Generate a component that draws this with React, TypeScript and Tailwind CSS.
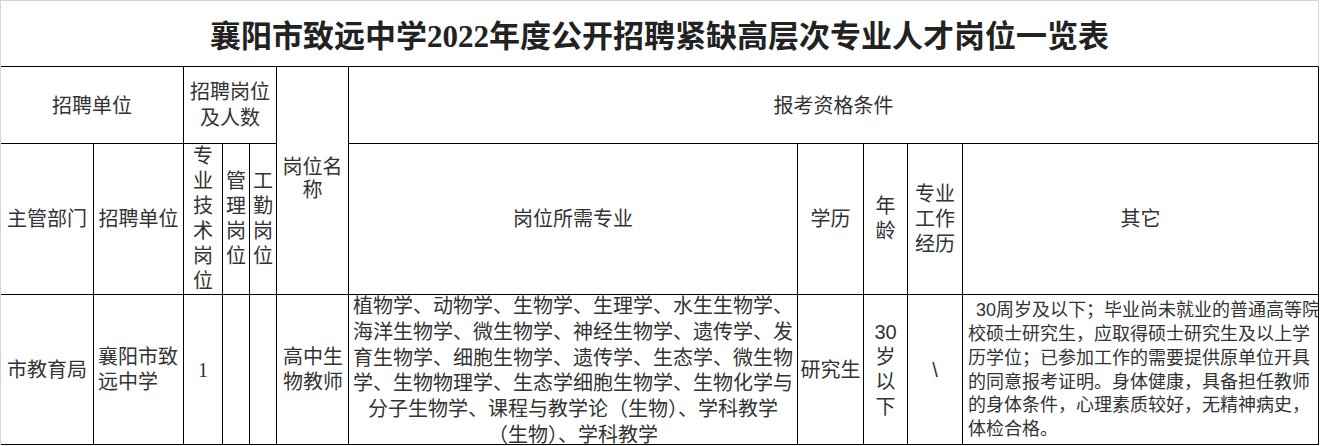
import type { ReactNode } from "react";

function Cell({
  className = "",
  children,
}: {
  className?: string;
  children?: ReactNode;
}) {
  return (
    <div
      className={`flex items-center justify-center overflow-hidden border-r border-b border-black text-center ${className}`}
    >
      {children}
    </div>
  );
}

function Stack({ chars }: { chars: string[] }) {
  return (
    <div className="leading-[25px] whitespace-nowrap">
      {chars.map((c, i) => (
        <div key={i}>{c}</div>
      ))}
    </div>
  );
}

const majors = [
  "植物学、动物学、生物学、生理学、水生生物学、",
  "海洋生物学、微生物学、神经生物学、遗传学、发",
  "育生物学、细胞生物学、遗传学、生态学、微生物",
  "学、生物物理学、生态学细胞生物学、生物化学与",
  "分子生物学、课程与教学论（生物）、学科教学",
  "（生物）、学科教学",
];

const others = [
  "校硕士研究生，应取得硕士研究生及以上学",
  "历学位；已参加工作的需要提供原单位开具",
  "的同意报考证明。身体健康，具备担任教师",
  "的身体条件，心理素质较好，无精神病史，",
  "体检合格。",
];

export default function App() {
  return (
    <div className="min-h-screen bg-white">
      <div className="grid w-fit grid-cols-[93px_90px_39px_27px_27px_72px_449px_66px_44px_55px_356px] grid-rows-[66px_77px_151px_150px] border-t border-l border-[#d4d4d4] font-['Liberation_Sans','Noto_Sans_CJK_SC',sans-serif] text-[20px] text-[#333]">
        {/* title */}
        <div className="col-span-11 flex items-center justify-center border-r border-b border-r-[#d4d4d4] border-b-black pt-[5px]">
          <h1 className="font-['Liberation_Serif','Noto_Sans_CJK_SC',serif] text-[31px] font-bold leading-none text-[#222]">
            襄阳市致远中学2022年度公开招聘紧缺高层次专业人才岗位一览表
          </h1>
        </div>

        {/* header row 1 */}
        <Cell className="col-span-2 pt-[2px]">招聘单位</Cell>
        <Cell className="col-span-3 leading-[26px]">
          <div>
            招聘岗位
            <br />
            及人数
          </div>
        </Cell>
        <Cell className="row-span-2 items-start leading-[23px]">
          <div className="mt-[89px]">
            岗位名
            <br />称
          </div>
        </Cell>
        <Cell className="col-span-5 pt-[2px]">报考资格条件</Cell>

        {/* header row 2 */}
        <Cell>主管部门</Cell>
        <Cell>招聘单位</Cell>
        <Cell>
          <Stack chars={["专", "业", "技", "术", "岗", "位"]} />
        </Cell>
        <Cell>
          <Stack chars={["管", "理", "岗", "位"]} />
        </Cell>
        <Cell>
          <Stack chars={["工", "勤", "岗", "位"]} />
        </Cell>
        <Cell>岗位所需专业</Cell>
        <Cell>学历</Cell>
        <Cell>
          <Stack chars={["年", "龄"]} />
        </Cell>
        <Cell>
          <Stack chars={["专业", "工作", "经历"]} />
        </Cell>
        <Cell>其它</Cell>

        {/* data row */}
        <Cell>市教育局</Cell>
        <Cell className="justify-start pl-[4px]">
          <div className="text-left leading-[25px]">
            襄阳市致
            <br />
            远中学
          </div>
        </Cell>
        <Cell className="font-['Liberation_Serif','Noto_Sans_CJK_SC',serif]">
          1
        </Cell>
        <Cell />
        <Cell />
        <Cell className="justify-start pl-[6px]">
          <div className="text-left leading-[25px]">
            高中生
            <br />
            物教师
          </div>
        </Cell>
        <Cell className="items-start">
          <div className="-mt-[1px] leading-[25.8px] whitespace-nowrap">
            {majors.map((line, i) => (
              <div key={i}>{line}</div>
            ))}
          </div>
        </Cell>
        <Cell>研究生</Cell>
        <Cell>
          <Stack chars={["30", "岁", "以", "下"]} />
        </Cell>
        <Cell>\</Cell>
        <Cell className="justify-start pl-[5px] pt-[2px]">
          <div className="text-left text-[18px] leading-[23.8px] whitespace-nowrap">
            <div className="pl-[8px]">30周岁及以下；毕业尚未就业的普通高等院</div>
            {others.map((line, i) => (
              <div key={i}>{line}</div>
            ))}
          </div>
        </Cell>
      </div>
    </div>
  );
}
